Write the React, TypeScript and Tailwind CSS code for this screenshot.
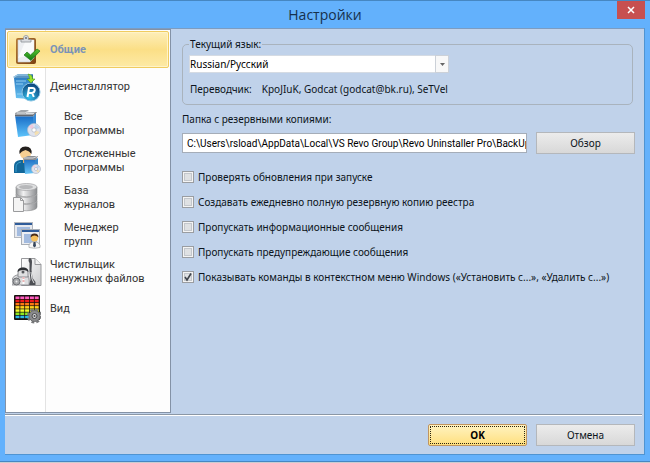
import { useState, type ReactNode } from 'react';
import clsx from 'clsx';

function ClipboardIcon() {
  return (
    <svg width="28" height="30" viewBox="0 0 28 30" aria-hidden="true">
      <defs>
        <linearGradient id="clip-wood" x1="0" y1="0" x2="1" y2="1">
          <stop offset="0" stopColor="#b57a35" />
          <stop offset="1" stopColor="#7d4310" />
        </linearGradient>
        <linearGradient id="clip-tick" x1="0" y1="0" x2="0" y2="1">
          <stop offset="0" stopColor="#5cc52f" />
          <stop offset="1" stopColor="#0c7a12" />
        </linearGradient>
      </defs>
      <rect x="3" y="3" width="20" height="26" rx="2" fill="url(#clip-wood)" />
      <path d="M5 5h16v18l-4 4H5z" fill="#eceef1" stroke="#c9ccd2" strokeWidth=".6" />
      <path d="M5 23l8-18h8v14z" fill="#fff" opacity=".7" />
      <path d="M8 7V4.500h2.500C10.500 1 11.500.5 13 .5s2.500.5 2.500 4H18V7z" fill="#d9dbdf" stroke="#8a8f96" strokeWidth=".8" />
      <circle cx="13" cy="3" r="1" fill="#6b7078" />
      <path d="M11 20l3-3 3.500 3L24 14l3 2-9 9.500z" fill="url(#clip-tick)" stroke="#1c7a1c" strokeWidth=".7" />
    </svg>
  );
}

function UninstallerIcon() {
  return (
    <svg width="28" height="30" viewBox="0 0 28 30" aria-hidden="true">
      <defs>
        <linearGradient id="un-box" x1="0" y1="0" x2="0" y2="1">
          <stop offset="0" stopColor="#2f7fc4" />
          <stop offset="1" stopColor="#69c3f2" />
        </linearGradient>
        <radialGradient id="un-disc" cx=".4" cy=".8" r=".8">
          <stop offset="0" stopColor="#35c3ee" />
          <stop offset="1" stopColor="#0b3f78" />
        </radialGradient>
      </defs>
      <path d="M0 5l5-3h15l-4 4H2z" fill="#5a96c4" />
      <path d="M1 5l4-2h13" fill="none" stroke="#a9d4ef" />
      <path d="M1 6h15v21l-13-1z" fill="url(#un-box)" />
      <path d="M3 9h10M3 12h7M4 22h5" stroke="#93d0f3" strokeWidth="1" />
      <path d="M16 6l4-4v9l-4 2z" fill="#2b6ea6" />
      <circle cx="18" cy="20" r="9" fill="url(#un-disc)" stroke="#8cc5e3" />
      <path d="M14.500 25l1.500-9h3.500q2.500 0 2.200 2.500-.3 2-2.500 2.500l1.600 4M15.500 21h4" fill="none" stroke="#fff" strokeWidth="2" />
      <path d="M15 2q5 1 4.500 5H22l-4 4-4-4h2.500q0-3-1.500-5z" fill="#9be02e" stroke="#4c9f1a" strokeWidth=".6" />
    </svg>
  );
}

function Disc({ cx, cy, r }: { cx: number; cy: number; r: number }) {
  return (
    <g>
      <circle cx={cx} cy={cy} r={r} fill="#dfe3ee" stroke="#b3b9c8" strokeWidth=".7" />
      <path d={`M${cx} ${cy}L${cx - r + 1} ${cy - 3}A${r} ${r} 0 0 1 ${cx - 1} ${cy - r + 1}z`} fill="#f0c9dd" />
      <path d={`M${cx} ${cy}L${cx + r - 1} ${cy + 2}A${r} ${r} 0 0 1 ${cx + 1} ${cy + r - 1}z`} fill="#f4dfb0" />
      <path d={`M${cx} ${cy}L${cx + 1} ${cy - r + 1}A${r} ${r} 0 0 1 ${cx + r - 1} ${cy - 2}z`} fill="#bcd4ef" />
      <circle cx={cx} cy={cy} r={r / 3} fill="#fff" stroke="#a4a9b8" strokeWidth=".6" />
    </g>
  );
}

function ProgramsIcon() {
  return (
    <svg width="28" height="30" viewBox="0 0 28 30" aria-hidden="true">
      <defs>
        <linearGradient id="pr-box" x1="0" y1="0" x2="0" y2="1">
          <stop offset="0" stopColor="#1568c4" />
          <stop offset="1" stopColor="#5ec4fb" />
        </linearGradient>
      </defs>
      <path d="M2 6h18v20l-15 2z" fill="url(#pr-box)" />
      <path d="M20 6l3-2v20l-3 3z" fill="#3a8bd6" />
      <path d="M2 4l6-3h8l-3 2.500 10-.5-2.500 4.500H2z" fill="#a3a7ac" />
      <path d="M2 6.500h18L23.500 3" fill="none" stroke="#64686f" />
      <path d="M4 4h8l4-2.500M13 4.500h8" fill="none" stroke="#dcdee1" />
      <Disc cx={21} cy={21} r={6.5} />
    </svg>
  );
}

function TrackedIcon() {
  return (
    <svg width="28" height="30" viewBox="0 0 28 30" aria-hidden="true">
      <defs>
        <linearGradient id="tr-box" x1="0" y1="0" x2="0" y2="1">
          <stop offset="0" stopColor="#2474c8" />
          <stop offset="1" stopColor="#67c5f6" />
        </linearGradient>
      </defs>
      <path d="M1 27V20q0-5 6-6h10v13z" fill="#12679a" />
      <path d="M3 26v-5q0-4 5-5" fill="none" stroke="#3da0cf" />
      <circle cx="12.500" cy="7.500" r="5.500" fill="#f7cf92" />
      <path d="M6.500 8Q5.500.5 12.500.5T18.500 8q-2-3-6-4-4 1-6 4z" fill="#24201e" />
      <path d="M10 13q3 2 5 0v4h-5z" fill="#eab06a" />
      <path d="M11 14h11v13l-10 1z" fill="url(#tr-box)" />
      <path d="M22 14l3-2v14l-3 1z" fill="#3787cc" />
      <path d="M10 12l5-2h10l-2 4H11z" fill="#8b8f95" />
      <path d="M11 12h9l4-1.500" fill="none" stroke="#d8dadd" />
      <Disc cx={23} cy={23} r={4.5} />
    </svg>
  );
}

function DatabaseIcon() {
  return (
    <svg width="28" height="30" viewBox="0 0 28 30" aria-hidden="true">
      <defs>
        <linearGradient id="db-metal" x1="0" y1="0" x2="1" y2="0">
          <stop offset="0" stopColor="#97999c" />
          <stop offset=".35" stopColor="#f1f1f2" />
          <stop offset="1" stopColor="#8b8d90" />
        </linearGradient>
      </defs>
      {[18, 11, 4].map((y) => (
        <g key={y}>
          <path d={`M3 ${y}v6c0 5 21 5 21 0v-6z`} fill="url(#db-metal)" stroke="#88898c" strokeWidth=".6" />
          <ellipse cx="13.500" cy={y} rx="10.500" ry="3.500" fill="#dedfe0" stroke="#a3a4a6" strokeWidth=".7" />
        </g>
      ))}
      <ellipse cx="13" cy="4" rx="7" ry="2" fill="#b7b8ba" />
      <path d="M.5 14.500h7l3 3v11H.5z" fill="#f4f4f4" stroke="#9a9b9d" />
      <path d="M7.500 14.500v3h3" fill="none" stroke="#9a9b9d" />
    </svg>
  );
}

function GroupsIcon() {
  return (
    <svg width="28" height="30" viewBox="0 0 28 30" aria-hidden="true">
      <rect x="1.500" y="2.500" width="18" height="15" fill="#e6e9ef" stroke="#b4b8bf" />
      <rect x="2" y="3" width="17" height="2" fill="#2f5c9a" />
      <rect x="4" y="7" width="13" height="9" fill="#a3bbdf" />
      <rect x="8.500" y="9.500" width="18" height="15" fill="#eceef2" stroke="#a9aeb5" />
      <rect x="9" y="10" width="17" height="2" fill="#2f5c9a" />
      <rect x="11" y="14" width="13" height="9" fill="#a3bbdf" />
      <path d="M16 27.500q-1-5 5-6 7 1 6 6-5 1.500-11 0z" fill="#f7f7f7" stroke="#9b9da0" strokeWidth=".7" />
      <path d="M20.500 22h2l.5 4-1.500 1.500L20 26z" fill="#39485e" />
      <circle cx="21.500" cy="18" r="3.500" fill="#f6c05c" />
      <path d="M17.500 17.500q0-4 4-4t4 4q-2-2-4-2t-4 2z" fill="#4b2e18" />
    </svg>
  );
}

function CleanerIcon() {
  return (
    <svg width="30" height="30" viewBox="0 0 30 30" aria-hidden="true">
      <defs>
        <linearGradient id="cl-page" x1="0" y1="0" x2="1" y2="1">
          <stop offset="0" stopColor="#ffffff" />
          <stop offset="1" stopColor="#c9cacc" />
        </linearGradient>
      </defs>
      <path d="M9.500 1.500H23l6 6v21H9.500z" fill="url(#cl-page)" stroke="#98999c" />
      <path d="M23 1.500v6h6" fill="#f4f4f4" stroke="#98999c" />
      <path d="M17.500 1q2.500 0 2.500 4l-.5 8 1 8 3 4v3h-7l2-5-1-9V6q-2-3 0-5z" fill="#4c4e53" />
      <path d="M19 15l1 7 2 4" fill="none" stroke="#e2e3e4" strokeWidth="1" />
      <path d="M0 28q-1-9 5-10l9-1q4 2 3 11z" fill="#dcdddf" stroke="#85878b" strokeWidth=".8" />
      <path d="M6 20v-4q0-5 5-5t5 5v4z" fill="#dfe0e1" stroke="#77797d" strokeWidth=".8" />
      <path d="M5.500 15q0-4.500 5.500-4.500t5.500 4.500q-2-2-5.500-2t-5.500 2z" fill="#2c2e32" />
      <circle cx="11" cy="15" r="1.500" fill="#55575b" />
      <circle cx="4.500" cy="24.500" r="3.500" fill="#a6a8ab" stroke="#6b6d71" />
      <circle cx="4.500" cy="24.500" r="1" fill="#eee" />
      <path d="M11.500 20v7" stroke="#fff" strokeWidth="2" />
      <path d="M10.500 21h2M10.500 24h2" stroke="#d96a6a" />
    </svg>
  );
}

const paletteRows = ['#ff5cc0', '#f01818', '#ff7a12', '#ffd21a', '#f3ff2e', '#8fe81e', '#2ab8e8'];

function AppearanceIcon() {
  return (
    <svg width="28" height="30" viewBox="0 0 28 30" aria-hidden="true">
      <rect x="1" y="1" width="26" height="25" rx="1" fill="#15110e" />
      {paletteRows.map((color, row) =>
        [0, 1, 2, 3, 4].map((col) => (
          <rect key={`${row}-${col}`} x={2.500 + col * 4.800} y={2.500 + row * 3.200} width="4" height="2.500" fill={color} />
        ))
      )}
      <circle cx="21.500" cy="22" r="6" fill="none" stroke="#77787a" strokeWidth="3" strokeDasharray="2.700 2" />
      <circle cx="21.500" cy="22" r="5.500" fill="#8a8b8d" stroke="#6e6f71" />
      <circle cx="21.500" cy="22" r="2.500" fill="#d8d9da" stroke="#4a4b4d" />
      <circle cx="21.500" cy="22" r="1" fill="#4a4b4d" />
    </svg>
  );
}

interface Section {
  id: string;
  lines: string[];
  icon: ReactNode;
  nested?: boolean;
}

const sections: Section[] = [
  { id: 'general', lines: ['Общие'], icon: <ClipboardIcon /> },
  { id: 'uninstaller', lines: ['Деинсталлятор'], icon: <UninstallerIcon /> },
  { id: 'programs', lines: ['Все', 'программы'], icon: <ProgramsIcon />, nested: true },
  { id: 'tracked', lines: ['Отслеженные', 'программы'], icon: <TrackedIcon />, nested: true },
  { id: 'logs', lines: ['База', 'журналов'], icon: <DatabaseIcon />, nested: true },
  { id: 'groups', lines: ['Менеджер', 'групп'], icon: <GroupsIcon />, nested: true },
  { id: 'cleaner', lines: ['Чистильщик', 'ненужных файлов'], icon: <CleanerIcon /> },
  { id: 'view', lines: ['Вид'], icon: <AppearanceIcon /> },
];

const options = [
  { id: 'updates', label: 'Проверять обновления при запуске', checked: false },
  { id: 'backup', label: 'Создавать ежедневно полную резервную копию реестра', checked: false },
  { id: 'info', label: 'Пропускать информационные сообщения', checked: false },
  { id: 'warnings', label: 'Пропускать предупреждающие сообщения', checked: false },
  {
    id: 'context',
    label: 'Показывать команды в контекстном меню Windows («Установить с...», «Удалить с...»)',
    checked: true,
  },
];

function Option({ id, label, checked }: { id: string; label: string; checked: boolean }) {
  return (
    <div className="flex h-[25px] items-center gap-1">
      <span className="relative flex size-3">
        <input
          id={id}
          type="checkbox"
          defaultChecked={checked}
          className="peer size-3 appearance-none border border-[#9a9da1] bg-[#dfe1e3] shadow-[inset_0_0_0_1px_#f4f4f4,inset_0_0_0_2px_#c3c7cc]"
        />
        <svg
          viewBox="0 0 12 12"
          className="pointer-events-none absolute inset-0 hidden size-3 peer-checked:block"
          aria-hidden="true"
        >
          <path d="M3 6l2 3 4-6.500" fill="none" stroke="#3f444c" strokeWidth="1.600" />
        </svg>
      </span>
      <label htmlFor={id} className="whitespace-nowrap">
        {label}
      </label>
    </div>
  );
}

function Sidebar() {
  const [active, setActive] = useState('general');

  return (
    <nav className="w-[166px] shrink-0 border border-[#8492a6] bg-[linear-gradient(to_right,#fff_39px,#e3e3e3_39px,#e3e3e3_40px,#fdfdfd_40px)] p-px font-[Roboto,sans-serif] text-[11px] leading-[14px] text-[#333]">
      {sections.map((section) => {
        const selected = section.id === active;
        return (
          <button
            key={section.id}
            type="button"
            onClick={() => setActive(section.id)}
            className={clsx(
              'flex h-[37px] w-full items-center rounded-[2px] border pl-1 text-left',
              selected
                ? 'border-[#f0cc60] bg-linear-to-b from-[#fdeeb9] via-[#fbdf86] to-[#fdeaa6] font-bold text-[#7b94b8] shadow-[inset_0_0_0_1px_#fff3c8]'
                : 'border-transparent'
            )}
          >
            <span className="flex w-[30px] shrink-0 justify-center">{section.icon}</span>
            <span className={section.nested ? 'pl-[22px]' : 'pl-2'}>
              {section.lines.map((line) => (
                <span key={line} className="block whitespace-nowrap">
                  {line}
                </span>
              ))}
            </span>
          </button>
        );
      })}
    </nav>
  );
}

function GeneralPage() {
  return (
    <main className="min-w-0 flex-1 pt-2 pr-[9px] pl-[11px]">
      <fieldset className="mr-[2px] h-[68px] rounded-[5px] border border-[#a9b3bd] px-[6px]">
        <legend className="px-px">
          <label htmlFor="language">Текущий язык:</label>
        </legend>
        <div className="relative mt-1 w-[260px]">
          <select
            id="language"
            className="block h-[18px] w-full appearance-none border border-[#d5dbe3] bg-white text-black"
          >
            <option>Russian/Русский</option>
          </select>
          <span className="pointer-events-none absolute inset-y-0 right-0 flex w-[14px] items-center justify-center border border-[#ccd1d8] bg-[#f8f8f8]">
            <svg width="5" height="3" viewBox="0 0 5 3" aria-hidden="true">
              <path d="M0 0h5L2.500 3z" fill="#666" />
            </svg>
          </span>
        </div>
        <p className="mt-[9px] flex gap-[10px] pl-px">
          <span>Переводчик:</span>
          <span>KpoJIuK, Godcat (godcat@bk.ru), SeTVel</span>
        </p>
      </fieldset>

      <label htmlFor="backups" className="mt-[7px] block">
        Папка с резервными копиями:
      </label>
      <div className="mt-[6px] flex items-center gap-[9px]">
        <input
          id="backups"
          type="text"
          defaultValue="C:\Users\rsload\AppData\Local\VS Revo Group\Revo Uninstaller Pro\BackUps"
          className="h-5 min-w-0 flex-1 border border-[#a5adb8] bg-white pl-1 font-[Roboto,sans-serif] text-black"
        />
        <DialogButton>Обзор</DialogButton>
      </div>

      <div className="mt-[10px]">
        {options.map((option) => (
          <Option key={option.id} {...option} />
        ))}
      </div>
    </main>
  );
}

function DialogButton({ children, primary }: { children: ReactNode; primary?: boolean }) {
  return (
    <button
      type="button"
      className={clsx(
        'h-[22px] w-[99px] shrink-0 border p-px',
        primary
          ? 'rounded-[2px] border-[#c09560] bg-linear-to-b from-[#fff3c0] to-[#ffdf7c] font-bold text-black'
          : 'border-[#b4b7bb] bg-linear-to-b from-[#ececec] to-[#d8d8d8]'
      )}
    >
      <span
        className={clsx(
          'flex h-full items-center justify-center',
          primary && 'border border-dotted border-[#2b2410]'
        )}
      >
        {children}
      </span>
    </button>
  );
}

export default function App() {
  return (
    <div className="flex min-h-screen flex-col border-b border-[#c9cdd2] bg-[#63b1fc] font-['Noto_Sans',sans-serif] text-[10px] leading-[14px] text-[#0c1420]">
      <div className="flex flex-1 flex-col border-y border-[#4687c2] px-[5px] pb-[6px]">
        <header className="relative flex h-[27px] items-center justify-center">
          <h1 className="font-['Open_Sans',sans-serif] text-sm text-[#16304c]">Настройки</h1>
          <button
            type="button"
            aria-label="Закрыть"
            className="absolute top-0 right-0 flex h-[18px] w-7 items-center justify-center bg-[#c75050]"
          >
            <svg width="8" height="8" viewBox="0 0 8 8" aria-hidden="true">
              <path d="M1 1l6 6M7 1L1 7" stroke="#fff" strokeWidth="1.500" />
            </svg>
          </button>
        </header>

        <div className="flex flex-1 flex-col border-r border-b border-[#4f94d2] bg-[#c0d2ea]">
          <div className="flex flex-1 border-t border-[#7d9cc0]">
            <Sidebar />
            <GeneralPage />
          </div>
          <footer className="mt-px mr-[2px] flex h-10 items-center justify-end gap-[9px] border-t border-[#8b97a5] pr-[7px] shadow-[inset_0_1px_0_#fff]">
            <DialogButton primary>OK</DialogButton>
            <DialogButton>Отмена</DialogButton>
          </footer>
        </div>
      </div>
    </div>
  );
}
